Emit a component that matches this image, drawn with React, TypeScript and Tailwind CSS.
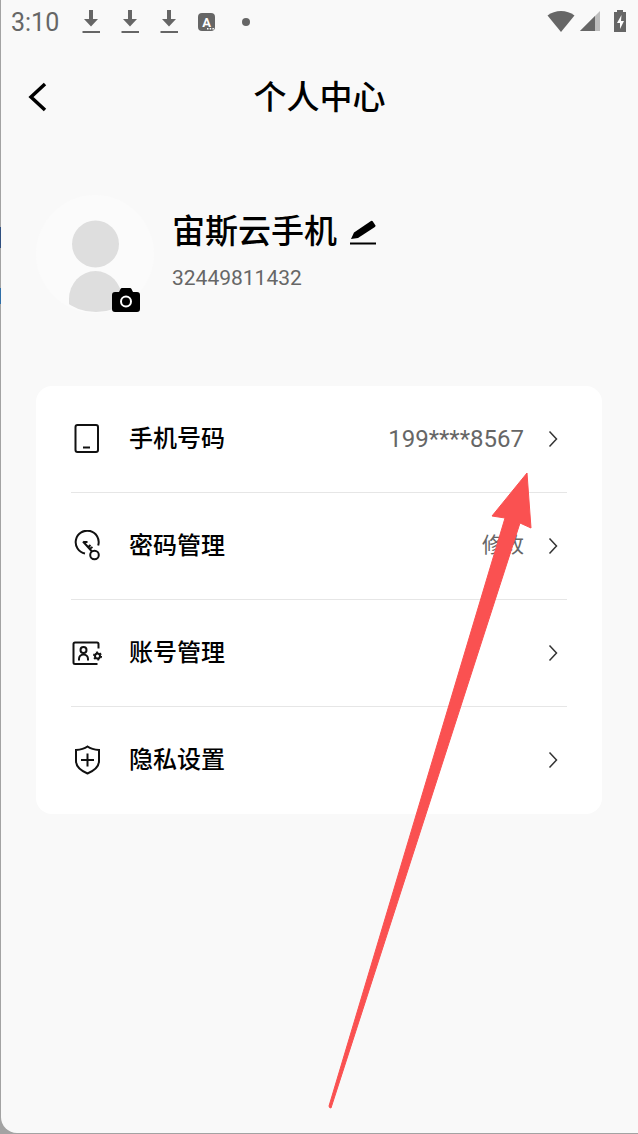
import type { ReactNode } from "react";

const DownloadIcon = () => (
  <svg viewBox="0 0 20 26" className="h-[26px] w-5" fill="#666666">
    <path d="M8 1h4v9h5L10 17.500 3 10h5z" />
    <path d="M1.500 22h17.500v2H1.500z" />
  </svg>
);

const StatusBar = () => (
  <div className="flex h-11 items-center justify-between pl-2.5 pr-[11px] text-[#666666]">
    <div className="flex items-center">
      <span className="w-[50px] pt-0.5 text-[25px] leading-8">3:10</span>
      <div className="ml-5 flex items-center gap-[19px]">
        <DownloadIcon />
        <DownloadIcon />
        <DownloadIcon />
        <span className="relative flex h-[18px] w-[17px] items-center justify-center rounded-sm bg-[#666666] text-[13px] font-bold leading-none text-white">
          A
          <svg viewBox="0 0 7 2" className="absolute bottom-px right-px h-0.5 w-[7px]" fill="#ffffff">
            <path d="M0 0h1.500v1.500H0zM2.700 0h1.500v1.500H2.700zM5.400 0h1.500v1.500H5.400z" />
          </svg>
        </span>
      </div>
      <span className="ml-[27px] h-2 w-2 rounded-full bg-[#666666]" />
    </div>
    <div className="flex items-center pb-0.5">
      <svg viewBox="0 0 28 24" className="h-6 w-7" fill="#666666">
        <path d="M0.500 6.500C8 0.500 20 0.500 27.500 6.500L14 23z" />
      </svg>
      <svg viewBox="0 0 20 22" className="ml-[5px] h-[22px] w-5">
        <path d="M20 1v20H0z" fill="#bdbdbd" />
        <path d="M15 6v15H0z" fill="#666666" />
      </svg>
      <svg viewBox="0 0 14 24" className="ml-[13px] h-6 w-3.5">
        <path d="M4 1h6v2h3v20H1V3h3z" fill="#666666" />
        <path d="M8.500 6L4 14h3v6l4-8H8z" fill="#ffffff" />
      </svg>
    </div>
  </div>
);

const Avatar = () => (
  <svg viewBox="0 0 118 118" className="h-[118px] w-[118px]">
    <defs>
      <clipPath id="avatar-clip">
        <ellipse cx="60" cy="76" rx="46" ry="41" />
      </clipPath>
    </defs>
    <circle cx="59" cy="59" r="59" fill="#fbfbfb" />
    <circle cx="59.500" cy="49" r="23.500" fill="#dedede" />
    <path d="M33 118v-14a26.500 28 0 0 1 53 0v14z" fill="#dedede" clipPath="url(#avatar-clip)" />
  </svg>
);

const CameraIcon = () => (
  <svg viewBox="0 0 28 24" className="h-6 w-7">
    <path d="M7 4l1.500-3q.5-1 1.500-1h8q1 0 1.500 1L21 4h4a3 3 0 0 1 3 3v14a3 3 0 0 1-3 3H3a3 3 0 0 1-3-3V7a3 3 0 0 1 3-3z" fill="#000000" />
    <circle cx="14" cy="13.500" r="5" fill="none" stroke="#ffffff" strokeWidth="2" />
  </svg>
);

const ICON = "h-8 w-8 fill-none stroke-[#111111] stroke-2";

const PhoneIcon = () => (
  <svg viewBox="0 0 32 32" className={ICON}>
    <rect x="4.500" y="2" width="22.500" height="27" rx="2" />
    <path d="M12 24.500h7" />
  </svg>
);

const KeyIcon = () => (
  <svg viewBox="0 0 32 32" className={ICON}>
    <path d="M14 23.500A11.500 11.500 0 1 1 27.200 15.500" />
    <circle cx="23.500" cy="25" r="4.300" />
    <path d="M12 11.500l9 10M13 12h3.500M17 17.500l2.500-2.500M18.500 19l3-2" />
  </svg>
);

const AccountIcon = () => (
  <svg viewBox="0 0 32 32" className={ICON}>
    <path d="M27.500 11.500V7A1.500 1.500 0 0 0 26 5.500H4A1.500 1.500 0 0 0 2.500 7v18.500A1.500 1.500 0 0 0 4 27H26.500" />
    <circle cx="12.500" cy="13" r="3" />
    <path d="M8 23.500v-1.500a4.500 4.500 0 0 1 9 0v1.500" />
    <circle cx="26.500" cy="19" r="2.500" />
    <circle cx="26.500" cy="19" r="3.800" strokeWidth="1.500" strokeDasharray="2 1.980" />
  </svg>
);

const ShieldIcon = () => (
  <svg viewBox="0 0 32 32" className={ICON}>
    <path d="M16.500 2.500c3 2.200 7 3.300 11.500 3.500v11c0 6-4.500 9.500-11.500 12.500C9.500 26.500 5 23 5 17V6c4.500-.2 8.500-1.300 11.500-3.500z" />
    <path d="M16.500 9.500v13M10 16h13" />
  </svg>
);

type RowProps = {
  icon: ReactNode;
  label: string;
  children?: ReactNode;
};

const Row = ({ icon, label, children }: RowProps) => (
  <li className="border-b border-[#e6e6e6] last:border-transparent">
    <button type="button" className="flex h-[106px] w-full items-center text-left">
      {icon}
      <span className="ml-[26px] text-2xl font-medium leading-8 text-black">{label}</span>
      <span className="ml-auto flex items-center text-[#666666]">
        {children}
        <svg viewBox="0 0 10 18" className="ml-6 mr-[9px] h-[18px] w-2.5 fill-none stroke-[#333333] stroke-[1.5]">
          <path d="M1.500 1.500l7 7.500-7 7.500" />
        </svg>
      </span>
    </button>
  </li>
);

export default function App() {
  return (
    <div className="relative flex min-h-screen bg-[#a3a3a3] pb-px font-[Roboto,'Noto_Sans_CJK_SC',sans-serif]">
      {/* Edge of the window behind */}
      <div className="flex w-px shrink-0 flex-col">
        <div className="h-[227px]" />
        <div className="h-[21px] bg-[#2f4f7f]" />
        <div className="h-10" />
        <div className="h-4 bg-[#2f6fa8]" />
      </div>

      <div className="flex-1 rounded-bl-2xl bg-[#f9f9f9]">
        <StatusBar />

        <header className="grid h-[106px] grid-cols-[64px_1fr_64px] items-center">
          <button type="button" aria-label="返回" className="flex h-16 items-center pl-[26px]">
            <svg viewBox="0 0 20 30" className="h-[30px] w-5 fill-none stroke-black stroke-[3.5]">
              <path d="M18 2L4 15l14 13" />
            </svg>
          </button>
          <h1 className="pt-0.5 text-center text-[33px] font-medium leading-10 text-black">个人中心</h1>
        </header>

        <section className="mt-[45px] flex pl-[35px]">
          <button type="button" aria-label="更换头像" className="relative h-[118px] w-[118px]">
            <Avatar />
            <span className="absolute bottom-px right-3.5">
              <CameraIcon />
            </span>
          </button>
          <div className="ml-[18px] pt-[17px]">
            <div className="flex items-center">
              <h2 className="text-[33px] font-medium leading-10 text-black">宙斯云手机</h2>
              <button type="button" aria-label="编辑昵称" className="ml-[13px]">
                <svg viewBox="0 0 28 28" className="h-7 w-7">
                  <path d="M1 21l3-6.500L21 3q1-.6 1.700.2l2.600 4q.5 1-.4 1.700L8 20z" fill="#000000" />
                  <path d="M0 24.500h26v2H0z" fill="#000000" />
                </svg>
              </button>
            </div>
            <p className="mt-3 text-[21px] leading-7 text-[#666666]">32449811432</p>
          </div>
        </section>

        <ul className="ml-[35px] mr-9 mt-[73px] rounded-2xl bg-white px-[35px]">
          <Row icon={<PhoneIcon />} label="手机号码">
            <span className="text-2xl">199****8567</span>
          </Row>
          <Row icon={<KeyIcon />} label="密码管理">
            <span className="text-[21px]">修改</span>
          </Row>
          <Row icon={<AccountIcon />} label="账号管理" />
          <Row icon={<ShieldIcon />} label="隐私设置" />
        </ul>
      </div>

      {/* Pointer drawn over the list */}
      <svg viewBox="0 0 204 640" className="pointer-events-none absolute left-[328px] top-[470px] h-[640px] w-[204px]">
        <path
          d="M199 3L164 46l13 2L1 636q0 2 2 2L192 53l11 5z"
          fill="#fa5151"
          stroke="#fa5151"
          strokeLinejoin="round"
        />
      </svg>
    </div>
  );
}
